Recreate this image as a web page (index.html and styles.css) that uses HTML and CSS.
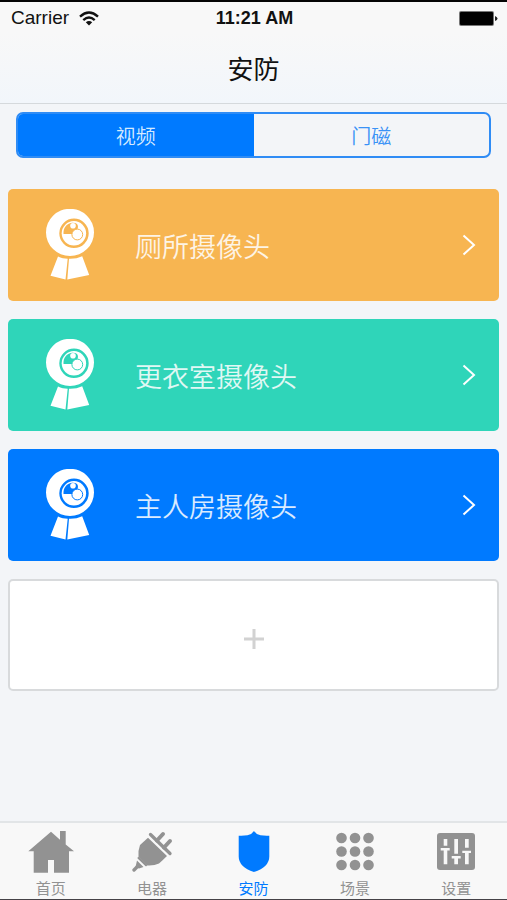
FILE: index.html
```html
<!DOCTYPE html>
<html lang="zh-CN">
<head>
<meta charset="utf-8">
<meta name="viewport" content="width=device-width, initial-scale=1">
<title>安防</title>
<link rel="stylesheet" href="styles.css">
</head>
<body>
<svg class="sprite" aria-hidden="true">
  <symbol id="camera" viewBox="0 1 50 72">
    <path fill="currentColor" fill-rule="evenodd" d="M25 .8a24 23.600 0 1 0 0 47.200a24 23.600 0 1 0 0-47.200zM29 10.600a14.700 14.700 0 1 1 0 29.400a14.700 14.700 0 1 1 0-29.400z"/>
    <circle cx="28.900" cy="25.300" r="12.200" fill="currentColor"/>
    <path class="cut" d="M28 26H18.500c-.5-6 3-10.500 8.500-11.300 4-.2 6 1 6 4.300l-1 4z"/>
    <circle cx="28" cy="17.800" r="2.800" fill="currentColor"/>
    <circle class="ring" cx="32.300" cy="26.500" r="5.400"/>
    <path fill="currentColor" d="M13 48.500c3 1.500 6.500 2.200 9.700 2.200L20.500 71.500 5.500 67.700zM24 50.700c5 .2 9-.6 13.200-2.500L44.200 67 22.300 71.500z"/>
  </symbol>
  <symbol id="chevron" viewBox="0 0 14 22">
    <path d="M1.500 1.500L12 11 1.500 20.500" fill="none" stroke="currentColor" stroke-width="2"/>
  </symbol>
</svg>

<header class="header">
  <div class="status">
    <span class="carrier">Carrier
      <svg class="wifi" viewBox="0 0 20 15" aria-hidden="true">
        <g fill="none" stroke="currentColor" stroke-width="2.400">
          <path d="M1 5.600Q10-2.400 19 5.600"/>
          <path d="M4.300 9.200Q10 4 15.700 9.200"/>
        </g>
        <path fill="currentColor" d="M6.800 11.300Q10 8.600 13.200 11.300L10 14.500z"/>
      </svg>
    </span>
    <span class="time">11:21 AM</span>
    <svg class="battery" viewBox="0 0 39 15" aria-hidden="true">
      <rect width="35" height="15" rx="2" fill="#777"/>
      <rect x="1" y="1" width="33" height="13" rx="1" fill="#000"/>
      <path fill="#222" d="M36 5q2.500 1 2.500 2.500T36 10z"/>
    </svg>
  </div>
  <h1 class="title">安防</h1>
</header>

<main class="main">
  <div class="segments">
    <button class="segment active" type="button" aria-pressed="true">视频</button>
    <button class="segment" type="button" aria-pressed="false">门磁</button>
  </div>
  <div class="cards">
    <a class="card orange" href="#bathroom">
      <svg class="camera" aria-hidden="true"><use href="#camera"/></svg>
      <span class="name">厕所摄像头</span>
      <svg class="chevron" aria-hidden="true"><use href="#chevron"/></svg>
    </a>
    <a class="card green" href="#dressing">
      <svg class="camera" aria-hidden="true"><use href="#camera"/></svg>
      <span class="name">更衣室摄像头</span>
      <svg class="chevron" aria-hidden="true"><use href="#chevron"/></svg>
    </a>
    <a class="card blue" href="#master">
      <svg class="camera" aria-hidden="true"><use href="#camera"/></svg>
      <span class="name">主人房摄像头</span>
      <svg class="chevron" aria-hidden="true"><use href="#chevron"/></svg>
    </a>
    <button class="card add" type="button" aria-label="添加">
      <svg class="plus" viewBox="0 0 20 20" aria-hidden="true"><path d="M10 0v20M0 10h20" stroke="currentColor" stroke-width="3"/></svg>
    </button>
  </div>
</main>

<nav class="tabs">
  <a class="tab" href="#home">
    <svg width="46" height="42" viewBox="0 0 46 42" aria-hidden="true"><path fill="currentColor" d="M23 .7L32 8.700V0h5.700v13.500l8.300 6.800H41v21.400H26V29h-6v12.700H5.700V20.300H.3z"/></svg>
    首页
  </a>
  <a class="tab" href="#devices">
    <svg width="41" height="42" viewBox="0 0 41 42" aria-hidden="true">
      <g fill="none" stroke="currentColor" stroke-linecap="round">
        <path stroke-width="3.300" d="M18.500 3.500L38 22.500"/>
        <path stroke-width="4" d="M25 9.500L31 3M32 16.500L38 10"/>
        <path stroke-width="2" d="M6.500 27L14 34.200"/>
        <path stroke-width="3.300" d="M2 39L6 35"/>
      </g>
      <path fill="currentColor" d="M16 6.700L35 25q-4 4-8 7.500-5 2.500-12 2L6.500 26q-.5-7 1.500-12zM5 29.500L11.500 36 7 37.500 3.500 36z"/>
    </svg>
    电器
  </a>
  <a class="tab current" href="#security" aria-current="page">
    <svg width="32" height="42" viewBox="0 0 32 42" aria-hidden="true"><path fill="currentColor" d="M16 0Q18 3.300 22.500 4.300 27 5 31.300 4.700V25.500Q31.300 36 16 41 .7 36 .7 25.500V4.700Q5 5 9.500 4.300 14 3.300 16 0z"/></svg>
    安防
  </a>
  <a class="tab" href="#scenes">
    <svg width="38" height="42" viewBox="0 0 38 42" aria-hidden="true">
      <g fill="currentColor">
        <circle cx="5.500" cy="7" r="5.300"/><circle cx="19" cy="7" r="5.300"/><circle cx="32.500" cy="7" r="5.300"/>
        <circle cx="5.500" cy="20.500" r="5.300"/><circle cx="19" cy="20.500" r="5.300"/><circle cx="32.500" cy="20.500" r="5.300"/>
        <circle cx="5.500" cy="34" r="5.300"/><circle cx="19" cy="34" r="5.300"/><circle cx="32.500" cy="34" r="5.300"/>
      </g>
    </svg>
    场景
  </a>
  <a class="tab" href="#settings">
    <svg width="38" height="42" viewBox="0 0 38 42" aria-hidden="true">
      <rect y="2" width="38" height="37" rx="3" fill="currentColor"/>
      <path fill="#f8f8f8" d="M6.700 8h3.600v6.700H6.700zM3.700 17h9v2.400h-2.400v13.900H6.700V19.400h-3zM17.300 8H21v14.700h-3.700zM14.700 25h9v2.400H21v5.900h-3.700v-5.900h-2.600zM28 8h3.700v8.700H28zM25.300 19.700H34v2.400h-2.300v11.200H28V22.100h-2.700z"/>
    </svg>
    设置
  </a>
</nav>
</body>
</html>
```
FILE: styles.css
```css
* {
  box-sizing: border-box;
}

body {
  display: flex;
  flex-direction: column;
  min-height: 100vh;
  margin: 0;
  border-top: 2px solid #050505;
  border-bottom: 1px solid #454247;
  background: #f3f5f8;
  font-family: "Liberation Sans", "Noto Sans CJK SC", sans-serif;
}

a {
  color: inherit;
  text-decoration: none;
}

button {
  padding: 0;
  font: inherit;
  cursor: pointer;
}

.sprite {
  display: none;
}

.header {
  border-bottom: 1px solid #d5d9dc;
  background: linear-gradient(#f8f8f8 30%, #f2f6fb);
}

.status {
  display: grid;
  grid-template-columns: 1fr auto 1fr;
  align-items: center;
  height: 32px;
  padding: 0 9px 0 11px;
  color: #111;
}

.carrier {
  display: flex;
  align-items: center;
  gap: 10px;
  font-size: 19px;
}

.wifi {
  width: 20px;
  height: 15px;
}

.time {
  font-size: 18px;
  font-weight: 700;
}

.battery {
  justify-self: end;
  width: 39px;
  height: 15px;
}

.title {
  margin: 0;
  padding-top: 3px;
  color: #111;
  font-size: 26px;
  font-weight: 400;
  line-height: 66px;
  text-align: center;
}

.main {
  flex: 1;
  padding: 8px;
}

.segments {
  display: flex;
  height: 46px;
  margin: 0 8px 31px;
  overflow: hidden;
  border: 2px solid #2f8cf5;
  border-radius: 7px;
}

.segment {
  flex: 1;
  border: 0;
  background: transparent;
  color: #3a92f6;
  font-size: 20px;
  font-weight: 350;
}

.segment.active {
  background: #007aff;
  color: #d5eaff;
}

.cards {
  display: flex;
  flex-direction: column;
  gap: 18px;
}

.card {
  display: flex;
  align-items: center;
  height: 112px;
  padding: 0 23px 0 37px;
  border-radius: 5px;
  color: #fff;
  font-size: 27px;
  font-weight: 350;
}

.orange {
  --tone: #f7b551;
}

.green {
  --tone: #2fd5b9;
}

.blue {
  --tone: #007aff;
}

.orange,
.green,
.blue {
  background: var(--tone);
}

.camera {
  width: 50px;
  height: 72px;
  margin-right: 40px;
}

.cut {
  fill: var(--tone);
}

.ring {
  fill: currentColor;
  stroke: var(--tone);
  stroke-width: 1px;
}

.name {
  flex: 1;
  opacity: 0.85;
}

.chevron {
  width: 14px;
  height: 22px;
}

.add {
  justify-content: center;
  padding: 7px 0 0;
  border: 2px solid #d8dadc;
  background: #fff;
  color: #d2d2d2;
}

.plus {
  width: 20px;
  height: 20px;
}

.tabs {
  display: flex;
  height: 78px;
  border-top: 2px solid #e2e5e7;
  background: #f8f8f8;
}

.tab {
  display: flex;
  flex: 1;
  flex-direction: column;
  align-items: center;
  gap: 6px;
  padding-top: 8px;
  color: #929292;
  font-size: 15px;
  line-height: 20px;
}

.tab.current {
  color: #007aff;
}
```
